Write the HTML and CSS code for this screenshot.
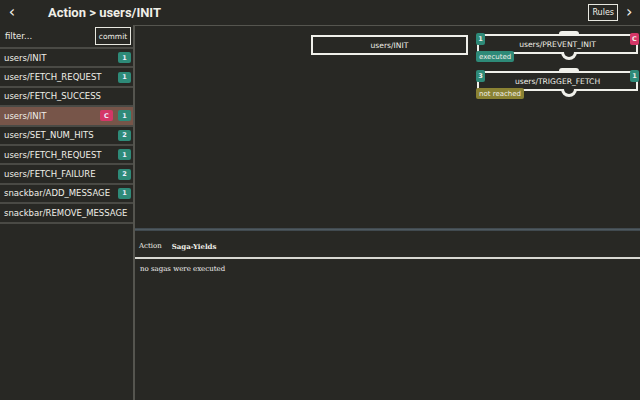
FILE: index.html
```html
<!DOCTYPE html>
<html>
<head>
<meta charset="utf-8">
<link rel="stylesheet" href="styles.css">
</head>
<body>
<div class="app">
  <header class="header">
    <span class="back">&lsaquo;</span>
    <h1 class="title">Action &gt; users/INIT</h1>
    <button class="rules">Rules</button>
    <span class="fwd">&rsaquo;</span>
  </header>
  <div class="main">
    <aside class="sidebar">
      <div class="filter-row">
        <span class="filter">filter...</span>
        <button class="commit">commit</button>
      </div>
      <ul class="list">
        <li class="row"><span class="name">users/INIT</span><span class="badge">1</span></li>
        <li class="row"><span class="name">users/FETCH_REQUEST</span><span class="badge">1</span></li>
        <li class="row"><span class="name">users/FETCH_SUCCESS</span></li>
        <li class="row selected"><span class="name">users/INIT</span><span class="badge pink">C</span><span class="badge">1</span></li>
        <li class="row"><span class="name">users/SET_NUM_HITS</span><span class="badge">2</span></li>
        <li class="row"><span class="name">users/FETCH_REQUEST</span><span class="badge">1</span></li>
        <li class="row"><span class="name">users/FETCH_FAILURE</span><span class="badge">2</span></li>
        <li class="row"><span class="name">snackbar/ADD_MESSAGE</span><span class="badge">1</span></li>
        <li class="row"><span class="name">snackbar/REMOVE_MESSAGE</span></li>
      </ul>
    </aside>
    <section class="content">
      <div class="diagram">
        <div class="node plain" style="left:176px;top:9px;width:153px;">users/INIT</div>
        <div class="node saga" style="left:342px;top:8px;width:157px;">
          <span class="knob-top"></span>
          <span class="knob-bottom"></span>
          users/PREVENT_INIT
          <span class="nb tl">1</span>
          <span class="nb tr pink">C</span>
          <span class="status executed">executed</span>
        </div>
        <div class="node saga" style="left:342px;top:45px;width:157px;">
          <span class="knob-top"></span>
          <span class="knob-bottom"></span>
          users/TRIGGER_FETCH
          <span class="nb tl">3</span>
          <span class="nb tr">1</span>
          <span class="status notreached">not reached</span>
        </div>
      </div>
      <div class="splitter"></div>
      <nav class="tabs">
        <span class="tab">Action</span>
        <span class="tab active">Saga-Yields</span>
      </nav>
      <div class="panel">no sagas were executed</div>
    </section>
  </div>
</div>
</body>
</html>
```
FILE: styles.css
```css
html, body {
  margin: 0;
  padding: 0;
  background: #282824;
  color: #f0efe8;
  font-family: "DejaVu Sans", sans-serif;
}
.app {
  width: 640px;
  height: 400px;
  display: flex;
  flex-direction: column;
  overflow: hidden;
}
.header {
  height: 25px;
  display: flex;
  align-items: center;
  flex-shrink: 0;
}
.back {
  width: 24px;
  text-align: center;
  font-size: 16px;
  line-height: 1;
  padding-bottom: 2px;
}
.title {
  margin: 0 0 0 24px;
  font-family: Roboto, "DejaVu Sans", sans-serif;
  font-size: 13px;
  font-weight: bold;
  flex: 1;
}
.rules {
  background: transparent;
  border: 1.5px solid #e8e8e0;
  color: #f0efe8;
  font-family: inherit;
  font-size: 8px;
  height: 17px;
  padding: 0 3px;
  margin-right: 8px;
}
.fwd {
  font-size: 16px;
  width: 14px;
  line-height: 1;
  padding-bottom: 2px;
}
.main {
  flex: 1;
  display: flex;
  min-height: 0;
}
.sidebar {
  width: 133px;
  border-right: 2px solid #55554f;
  display: flex;
  flex-direction: column;
  flex-shrink: 0;
}
.filter-row {
  height: 22px;
  display: flex;
  align-items: center;
  justify-content: space-between;
  padding: 0 2px 0 5px;
  border-bottom: 2px solid #4a4a45;
}
.filter {
  font-size: 8.5px;
}
.commit {
  background: transparent;
  border: 1.5px solid #e8e8e0;
  color: #f0efe8;
  font-family: inherit;
  font-size: 7.5px;
  height: 18px;
  width: 36px;
  padding: 0;
}
.list {
  list-style: none;
  margin: 0;
  padding: 0;
}
.row {
  height: 17.4px;
  border-bottom: 2px solid #4a4a45;
  display: flex;
  align-items: center;
  padding: 0 2px 0 4px;
  gap: 5px;
}
.row.selected {
  background: #775549;
}
.name {
  flex: 1;
  font-size: 8.5px;
  white-space: nowrap;
}
.badge {
  background: #2e8a78;
  color: #eef;
  font-size: 6.5px;
  font-weight: bold;
  width: 13px;
  height: 11px;
  border-radius: 2px;
  display: flex;
  align-items: center;
  justify-content: center;
}
.badge.pink {
  background: #d43667;
}
.content {
  flex: 1;
  display: flex;
  flex-direction: column;
  border-top: 1.5px solid #55554f;
  min-width: 0;
}
.diagram {
  height: 202px;
  position: relative;
}
.node {
  position: absolute;
  height: 16px;
  border: 2px solid #f0f0ea;
  font-size: 7.6px;
  display: flex;
  align-items: center;
  justify-content: center;
}
.knob-top {
  position: absolute;
  top: -5px;
  left: 80px;
  width: 20px;
  height: 4px;
  background: #f0f0ea;
  border-radius: 3px 3px 0 0;
}
.knob-bottom {
  position: absolute;
  bottom: -8px;
  left: 82px;
  width: 16px;
  height: 8px;
  background: #f0f0ea;
  border-radius: 0 0 9px 9px;
}
.knob-bottom::after {
  content: "";
  position: absolute;
  left: 3px;
  top: 0;
  width: 10px;
  height: 5px;
  background: #282824;
  border-radius: 0 0 6px 6px;
}
.nb {
  position: absolute;
  top: -3px;
  width: 9px;
  height: 12px;
  background: #2e8a78;
  border-radius: 2px;
  font-size: 6.5px;
  font-weight: bold;
  display: flex;
  align-items: center;
  justify-content: center;
}
.nb.tl { left: -3px; }
.nb.tr { right: -3px; }
.nb.pink { background: #d43667; }
.status {
  position: absolute;
  left: -3px;
  bottom: -10px;
  height: 11px;
  padding: 0 3px;
  border-radius: 2px;
  font-size: 7px;
  display: flex;
  align-items: center;
}
.executed { background: #2e8a78; }
.notreached { background: #8a8233; }
.splitter {
  height: 3px;
  background: linear-gradient(#3a4247, #4f5a60, #3a4247);
}
.tabs {
  height: 28px;
  display: flex;
  align-items: center;
  gap: 10px;
  padding: 4px 0 0 4px;
  box-sizing: border-box;
  border-bottom: 2px solid #d8d8d2;
  font-family: "DejaVu Serif", serif;
  font-size: 7px;
}
.tab.active {
  font-weight: bold;
}
.panel {
  padding: 6px 5px;
  font-family: "DejaVu Serif", serif;
  font-size: 7px;
  color: #f0f0f0;
}
```
